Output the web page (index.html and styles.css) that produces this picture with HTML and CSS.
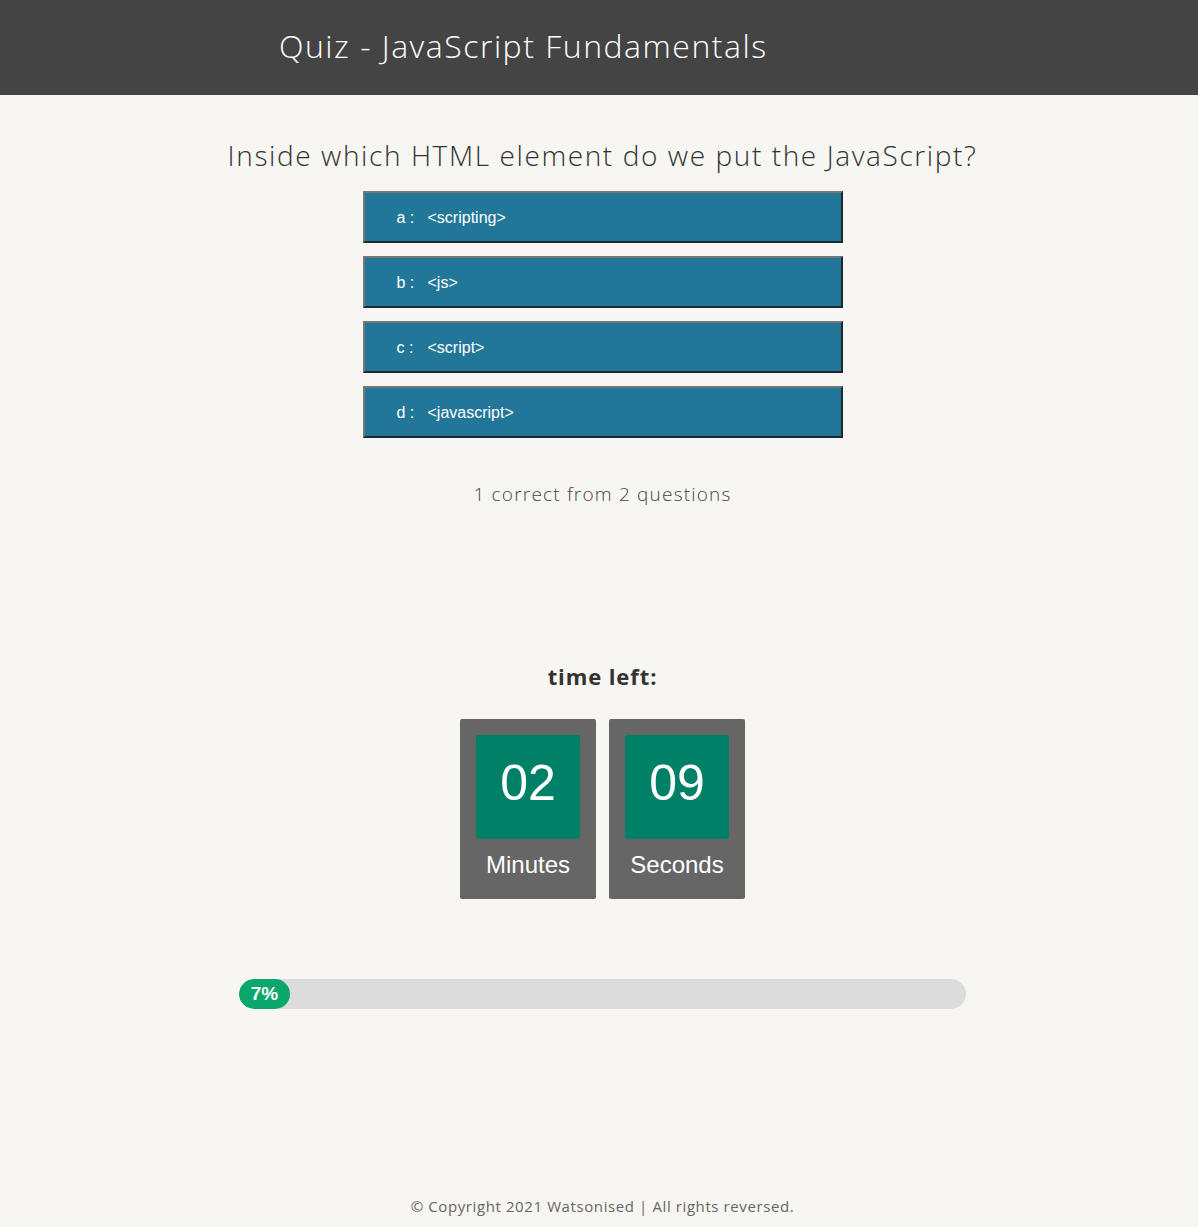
FILE: index.html
```html
<!DOCTYPE html>
<html lang="en">
<head>
<meta charset="utf-8">
<title>Quiz - JavaScript Fundamentals</title>
<link rel="stylesheet" href="styles.css">
</head>
<body>
<header class="topbar">
  <h1 class="title">Quiz - JavaScript Fundamentals</h1>
</header>
<main class="main">
  <h2 class="question">Inside which HTML element do we put the JavaScript?</h2>
  <div class="answers">
    <button class="answer"><span class="key">a :</span><span class="text">&lt;scripting&gt;</span></button>
    <button class="answer"><span class="key">b :</span><span class="text">&lt;js&gt;</span></button>
    <button class="answer"><span class="key">c :</span><span class="text">&lt;script&gt;</span></button>
    <button class="answer"><span class="key">d :</span><span class="text">&lt;javascript&gt;</span></button>
  </div>
  <p class="score">1 correct from 2 questions</p>
  <h3 class="timer-title">time left:</h3>
  <div class="timer">
    <div class="unit"><div class="digits">02</div><div class="label">Minutes</div></div>
    <div class="unit"><div class="digits">09</div><div class="label">Seconds</div></div>
  </div>
  <div class="progress"><div class="fill" style="width: 51px">7%</div></div>
</main>
<footer class="footer">© Copyright 2021 Watsonised | All rights reversed.</footer>
</body>
</html>
```
FILE: styles.css
```css
* { box-sizing: border-box; }
html, body { margin: 0; padding: 0; }
body {
  background: #f7f6f2;
  font-family: "Open Sans", "Liberation Sans", sans-serif;
  color: #333;
  min-height: 1227px;
  display: flex;
  flex-direction: column;
}
.topbar {
  background: #444444;
  height: 95px;
  display: flex;
  align-items: center;
  padding-left: 279px;
  padding-bottom: 4px;
}
.title {
  margin: 0;
  color: #fff;
  font-weight: 300;
  font-size: 32px;
  letter-spacing: 1.5px;
}
.main {
  flex: 1;
  display: flex;
  flex-direction: column;
  align-items: center;
  padding-left: 7px;
}
.question {
  margin: 38px 0 0;
  font-weight: 300;
  font-size: 28px;
  color: #333;
  line-height: 44px;
  height: 58px;
  letter-spacing: 1.6px;
}
.answers {
  display: flex;
  flex-direction: column;
  gap: 13px;
  width: 480px;
}
.answer {
  height: 52px;
  width: 100%;
  background: #227799;
  border: 2px solid;
  border-color: #777 #1b2a30 #1b2a30 #777;
  color: #fff;
  font-family: "Liberation Sans", Arial, sans-serif;
  font-size: 16px;
  text-align: left;
  padding: 2px 0 0 32px;
  display: flex;
  align-items: center;
}
.key { width: 31px; }
.score {
  margin: 43px 0 0;
  font-size: 19px;
  font-weight: 300;
  color: #444;
  letter-spacing: 1.2px;
}
.timer-title {
  margin: 154px 0 0;
  font-size: 22px;
  font-weight: 700;
  color: #333;
  letter-spacing: 0.9px;
}
.timer {
  margin-top: 28px;
  display: flex;
  gap: 13px;
}
.unit {
  width: 136px;
  height: 180px;
  background: #666;
  border-radius: 2px;
  padding: 16px;
  display: flex;
  flex-direction: column;
  align-items: center;
}
.digits {
  width: 104px;
  height: 104px;
  background: #008066;
  border-radius: 2px;
  color: #fff;
  font-family: "Liberation Sans", Arial, sans-serif;
  font-size: 50px;
  display: flex;
  align-items: center;
  justify-content: center;
  padding-bottom: 8px;
}
.label {
  margin-top: 12px;
  color: #fff;
  font-family: "Liberation Sans", Arial, sans-serif;
  font-size: 24px;
}
.progress {
  margin-top: 80px;
  width: 727px;
  height: 30px;
  background: #dcdcdc;
  border-radius: 15px;
  overflow: hidden;
}
.fill {
  height: 100%;
  background: #0aa66b;
  border-radius: 15px;
  color: #fff;
  font-family: "Liberation Sans", Arial, sans-serif;
  font-weight: 700;
  font-size: 19px;
  display: flex;
  align-items: center;
  justify-content: center;
}
.footer {
  text-align: center;
  font-size: 15px;
  color: #666;
  padding: 0 0 11px 7px;
  letter-spacing: 0.6px;
}
```
